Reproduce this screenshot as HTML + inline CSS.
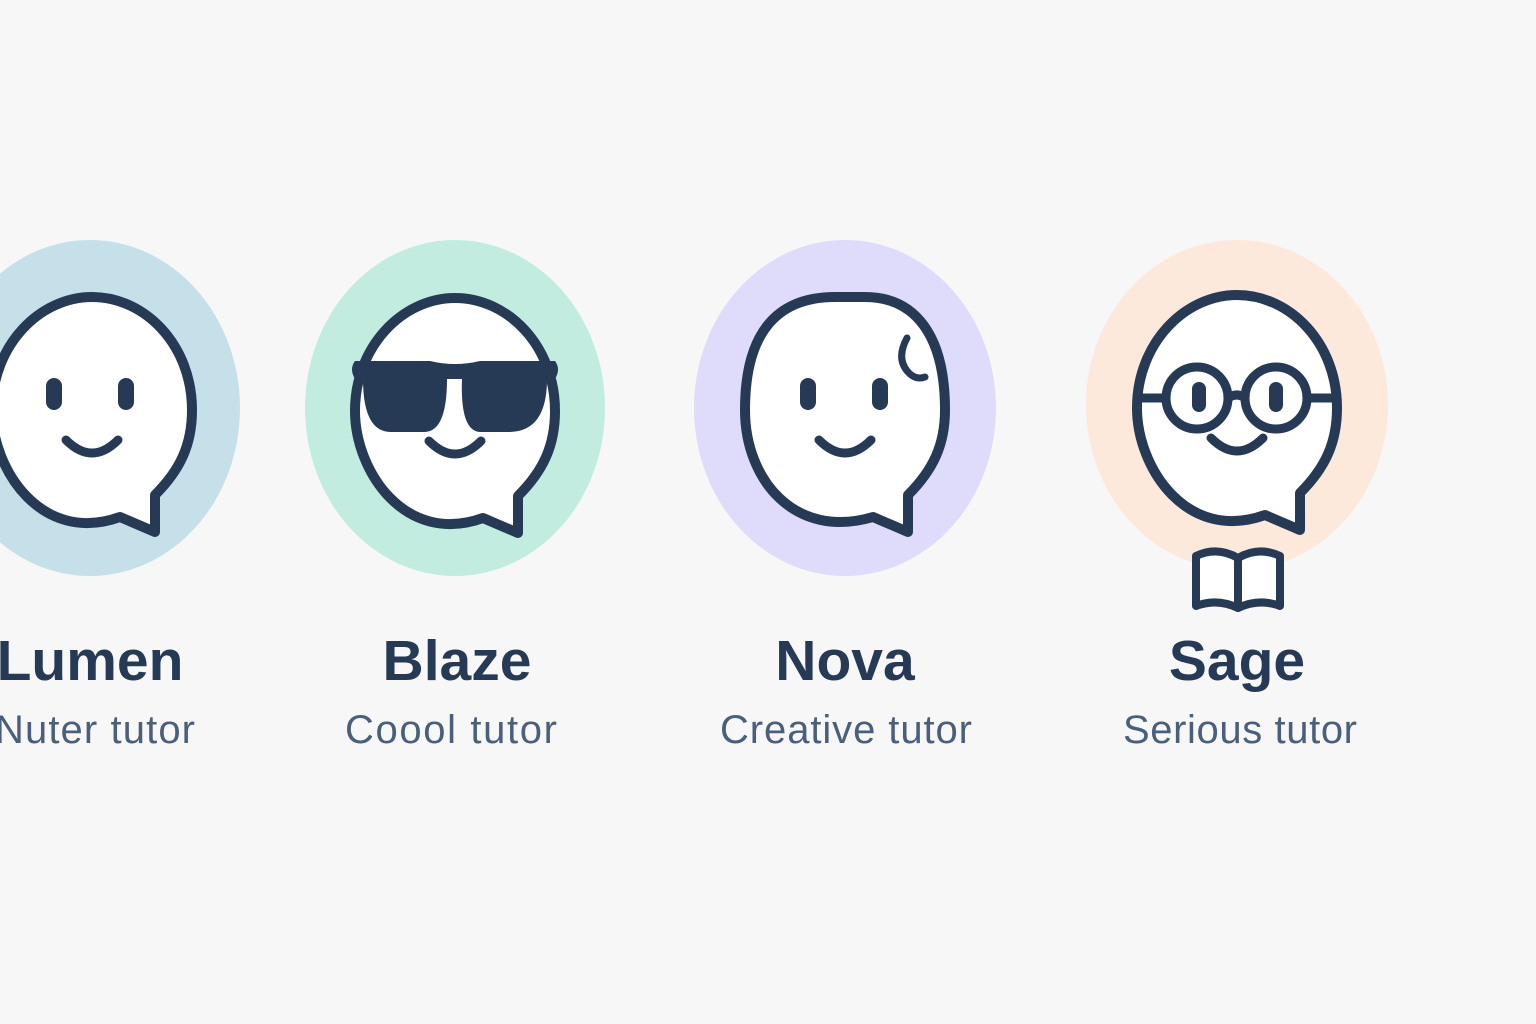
<!DOCTYPE html>
<html><head><meta charset="utf-8"><style>
html,body{margin:0;padding:0;background:#f7f7f7;width:1536px;height:1024px;overflow:hidden}
svg{position:absolute;left:0;top:0}
text{font-family:"Liberation Sans",sans-serif;text-anchor:middle}
.n{font-weight:700;font-size:57px;fill:#263a55}
.s{font-size:40px;fill:#4a5f7c}
</style></head><body>
<svg width="1536" height="1024" viewBox="0 0 1536 1024">
<defs>
<path id="face" d="M28,107 C-50,135 -100,60 -100,0 C-100,-65 -52,-113 0,-113 C53,-113 100,-65 100,0 C100,35 88,60 63,85 L63,122 Z" fill="#fff" stroke="#263a55" stroke-width="10" stroke-linejoin="round"/>
<path id="smile" d="M-26,30 Q0,56 26,30" fill="none" stroke="#263a55" stroke-width="9" stroke-linecap="round"/>
</defs>
<ellipse cx="90" cy="408" rx="150" ry="168" fill="#c6e0ea"/>
<ellipse cx="455" cy="408" rx="150" ry="168" fill="#c3ece0"/>
<ellipse cx="845" cy="408" rx="151" ry="168" fill="#dfdcfb"/>
<ellipse cx="1237" cy="405" rx="151" ry="165" fill="#fde9db"/>

<g transform="translate(92,410)">
<use href="#face"/><use href="#smile"/>
<rect x="-46" y="-32" width="16" height="32" rx="8" fill="#263a55"/>
<rect x="26" y="-32" width="16" height="32" rx="8" fill="#263a55"/>
</g>

<g transform="translate(455,411)">
<use href="#face"/><use href="#smile"/>
<path d="M-100,-50 L-25,-50 Q0,-44 25,-50 L100,-50 Q106,-42 100,-32 L92,-32 Q92,20 55,21 L25,21 Q5,20 7,-32 L-8,-32 Q-8,20 -30,21 L-65,21 Q-92,20 -92,-32 L-100,-32 Q-106,-42 -100,-50 Z" fill="#263a55"/>
</g>

<g transform="translate(845,410)">
<path d="M28,107 C-50,130 -100,70 -100,0 C-100,-75 -70,-113 -10,-113 L20,-113 C70,-113 100,-75 100,0 C100,35 88,60 63,85 L63,122 Z" fill="#fff" stroke="#263a55" stroke-width="10" stroke-linejoin="round"/>
<use href="#smile"/>
<rect x="-45" y="-32" width="16" height="32" rx="8" fill="#263a55"/>
<rect x="27" y="-32" width="16" height="32" rx="8" fill="#263a55"/>
<path d="M62,-72 Q50,-50 65,-36 Q72,-30 80,-33" fill="none" stroke="#263a55" stroke-width="7" stroke-linecap="round"/>
</g>

<g transform="translate(1237,408)">
<use href="#face"/><use href="#smile"/>
<g fill="none" stroke="#263a55" stroke-width="9">
<circle cx="-40" cy="-10" r="31"/><circle cx="39" cy="-10" r="31"/>
<path d="M-9,-10 Q0,-16 8,-10 M-71,-10 L-98,-10 M70,-10 L98,-10"/>
</g>
<rect x="-45" y="-26" width="14" height="30" rx="7" fill="#263a55"/>
<rect x="32" y="-26" width="14" height="30" rx="7" fill="#263a55"/>
</g>

<g fill="#fff" stroke="#263a55" stroke-width="8" stroke-linejoin="round">
<path d="M1196,556 Q1217,546 1238,558 L1238,608 Q1217,598 1196,606 Z"/>
<path d="M1280,556 Q1259,546 1238,558 L1238,608 Q1259,598 1280,606 Z"/>
</g>

<text class="n" x="90" y="680">Lumen</text>
<text class="n" x="457" y="680">Blaze</text>
<text class="n" x="845" y="680">Nova</text>
<text class="n" x="1237" y="680">Sage</text>
<text class="s" x="95" y="743" textLength="200">Nuter tutor</text>
<text class="s" x="451" y="743" textLength="212">Coool tutor</text>
<text class="s" x="846" y="743" textLength="252">Creative tutor</text>
<text class="s" x="1240" y="743" textLength="234">Serious tutor</text>
</svg>
</body></html>
